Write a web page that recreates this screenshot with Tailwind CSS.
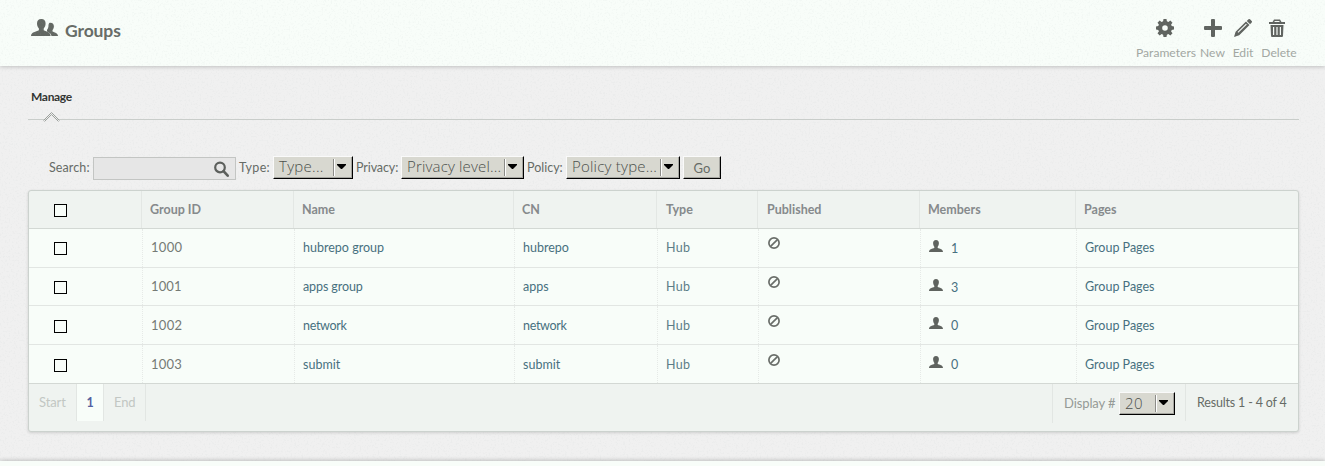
<!DOCTYPE html>
<html lang="en">
<head>
<meta charset="utf-8">
<title>Groups</title>
<script src="https://cdn.jsdelivr.net/npm/@tailwindcss/browser@4"></script>
</head>
<body class="relative h-[466px] overflow-hidden bg-[#f0f0f0] font-['Lato',sans-serif] text-[13px] leading-[16px] text-[#666b66]">
<svg width="0" height="0" class="absolute"><defs>
<symbol id="person" viewBox="0 0 14 12"><path d="M7 0C5 0 4 1.300 4.100 3.200 4.200 4.900 4.800 6 5.300 6.700v1.400C3.500 8.900 0 9 0 12h14c0-3-3.500-3.100-5.300-3.900V6.700C9.200 6 9.800 4.900 9.900 3.200 10 1.300 9 0 7 0z"/></symbol>
<symbol id="ban" viewBox="0 0 12 12"><circle cx="6" cy="6" r="5.100" fill="none" stroke="currentColor" stroke-width="1.700"/><path d="M2.800 9.200 9.200 2.800" stroke="currentColor" stroke-width="1.700"/></symbol>
</defs></svg>

<header class="flex h-[66px] justify-between bg-[#f8fdf9] shadow-[0_1px_4px_rgba(0,0,0,0.2)]">
  <div class="flex pl-[31px] pt-[18px]">
    <svg class="h-[19px] w-[27px] fill-[#636863]" viewBox="0 0 27 19"><path d="M19.300 4.800c2.400 0 3.700 1.600 3.600 3.800 0 1.600-.7 2.800-1.400 3.500v1.300c1.800 1 5.500 1.300 5.500 4.600h-6.500c-.5-2.400-2-3.400-4.500-4.600v-1.600c1-1 1.600-2.900 1.500-4.900.2-1.500.9-2.100 1.800-2.100z"/><path d="M10.300 1C7.400 1 5.900 3 6 5.700c.1 2 .9 3.700 1.900 4.700v1.900C5 13.800 0 14.200 0 18h19.600c0-3.800-3.900-4.200-6.900-5.700v-1.900c1-1 1.800-2.700 1.900-4.700C14.700 3 13.200 1 10.300 1z"/></svg>
    <h1 class="ml-[7px] mt-[2px] text-[17.500px] leading-[22px] font-bold tracking-[-0.1px]">Groups</h1>
  </div>
  <nav class="flex pr-[24px] pt-[18px] text-[12.100px] leading-[16px] text-[#a2a7a2]">
    <a class="flex w-[60px] flex-col items-center gap-[7px] whitespace-nowrap">
      <svg class="mr-[3px] h-[20px] w-[20px] fill-[#5f635f]" viewBox="0 0 20 20"><path fill-rule="evenodd" d="M8.500 1h3l.4 2.300 1.500.6 1.900-1.400 2.200 2.200-1.400 1.900.6 1.500 2.300.4v3l-2.300.4-.6 1.500 1.400 1.900-2.200 2.200-1.900-1.400-1.500.6-.4 2.300h-3l-.4-2.300-1.500-.6-1.900 1.400-2.200-2.200 1.400-1.900-.6-1.500L1 11.500v-3l2.300-.4.6-1.500-1.400-1.900 2.200-2.200 1.900 1.400 1.500-.6zM10 7.200a2.800 2.800 0 1 0 0 5.600 2.800 2.800 0 0 0 0-5.600z"/></svg><span>Parameters</span></a>
    <a class="flex w-[33px] flex-col items-center gap-[7px] whitespace-nowrap">
      <svg class="h-[20px] w-[20px] fill-[#5f635f]" viewBox="0 0 20 20"><path d="M8 2q0-1 1-1h2q1 0 1 1v6h6q1 0 1 1v2q0 1-1 1h-6v6q0 1-1 1H9q-1 0-1-1v-6H2q-1 0-1-1V9q0-1 1-1h6z"/></svg><span>New</span></a>
    <a class="flex w-[28px] flex-col items-center gap-[7px] whitespace-nowrap">
      <svg class="h-[20px] w-[20px] fill-[#5f635f]" viewBox="0 0 20 20"><path fill-rule="evenodd" d="M13 3.500l3.500 3.500L6.200 17.300 1 19l1.600-5.300zM4.600 14l.7.800 8.500-8.300-.8-.8zM15.500 1.200q.7-.6 1.500 0l1.700 1.800q.8.800 0 1.600l-1.600 1.600-3.300-3.300z"/></svg><span>Edit</span></a>
    <a class="flex w-[44px] flex-col items-center gap-[7px] whitespace-nowrap">
      <svg class="mr-[5px] h-[20px] w-[16px] fill-[#5f635f]" viewBox="0 0 16 20"><path d="M5 1.500h6l1.500 2.500H16v2H0V4h3.500zM5.800 3l-.5 1h5.400l-.5-1z" fill-rule="evenodd"/><path fill-rule="evenodd" d="M1.500 7h13L14 18q-.1 1-1 1H3q-.9 0-1-1zM4 9v8h1.200V9zM7.400 9v8h1.200V9zM10.800 9v8H12V9z"/></svg><span>Delete</span></a>
  </nav>
</header>

<!-- paper grain -->
<svg class="pointer-events-none absolute inset-0 h-[466px] w-[1325px] opacity-[0.07]"><filter id="grain"><feTurbulence type="fractalNoise" baseFrequency=".55" numOctaves="2" seed="4"/><feColorMatrix values="0 0 0 0 .45  0 0 0 0 .5  0 0 0 0 .5  5 0 0 0 -2.600"/></filter><rect width="1325" height="466" filter="url(#grain)"/></svg>

<main class="relative mx-[28px] w-[1271px]">
  <div class="relative flex h-[54px] border-b border-[#c9cdca] pl-[3px] pt-[23px]">
    <span class="text-[12px] font-bold tracking-[-0.32px] text-[#333633]">Manage</span>
    <svg class="absolute left-[15px] top-[45px] h-[12px] w-[17px]" viewBox="0 0 17 12"><path d="M0 11 8.500 2.500 17 11z" fill="#eeeeee"/><path d="M.5 9.500 8.500 1.500l8 8M1.500 10.500 8.500 3.500l7 7" fill="none" stroke="#9ca19d"/></svg>
  </div>

  <form class="flex h-[70px] items-start pl-[21px] pt-[36px]">
    <label class="mt-[4px] w-[44px] whitespace-nowrap text-[12.500px] tracking-[0.1px]">Search:</label>
    <div class="mt-px flex h-[23px] w-[143px] justify-end border border-[#c3c5c3] bg-[#e6e6e6] pr-[5px] pt-[3px]">
      <svg class="h-[17px] w-[17px]" viewBox="0 0 17 17" fill="none" stroke="#5c5f5c"><circle cx="7" cy="6.500" r="4.800" stroke-width="2.200"/><path d="m10.500 10.200 4.200 4.500" stroke-width="2.600" stroke-linecap="round"/></svg>
    </div>
    <label class="ml-[3px] mt-[4px] w-[34px] whitespace-nowrap text-[12.500px] tracking-[0.3px]">Type:</label>
    <div class="flex h-[23px] w-[80px] border border-t-[#fafafa] border-l-[#fafafa] border-r-black border-b-black bg-[#d8d8d0] pl-[5px] font-['Open_Sans',sans-serif] text-[15px] font-light leading-[19px] text-[#4c504c] shadow-[inset_-1px_-1px_0_#a5a5a0]"><span class="w-[54px] whitespace-nowrap tracking-[0.3px]">Type...</span><i class="mt-[2px] h-[17px] w-[2px] border-l border-[#8c8c88] bg-white"></i><svg class="ml-[2px] mt-[7px] h-[6px] w-[9px]" viewBox="0 0 9 6"><path d="M0 0h9v1L5 5H4L0 1z"/></svg></div>
    <label class="ml-[3px] mt-[4px] w-[45px] whitespace-nowrap text-[12.500px] tracking-[-0.1px]">Privacy:</label>
    <div class="flex h-[23px] w-[123px] border border-t-[#fafafa] border-l-[#fafafa] border-r-black border-b-black bg-[#d8d8d0] pl-[5px] font-['Open_Sans',sans-serif] text-[15px] font-light leading-[19px] text-[#4c504c] shadow-[inset_-1px_-1px_0_#a5a5a0]"><span class="w-[97px] whitespace-nowrap tracking-[0.16px]">Privacy level...</span><i class="mt-[2px] h-[17px] w-[2px] border-l border-[#8c8c88] bg-white"></i><svg class="ml-[2px] mt-[7px] h-[6px] w-[9px]" viewBox="0 0 9 6"><path d="M0 0h9v1L5 5H4L0 1z"/></svg></div>
    <label class="ml-[3px] mt-[4px] w-[39px] whitespace-nowrap text-[12.500px]">Policy:</label>
    <div class="flex h-[23px] w-[114px] border border-t-[#fafafa] border-l-[#fafafa] border-r-black border-b-black bg-[#d8d8d0] pl-[5px] font-['Open_Sans',sans-serif] text-[15px] font-light leading-[19px] text-[#4c504c] shadow-[inset_-1px_-1px_0_#a5a5a0]"><span class="w-[88px] whitespace-nowrap tracking-[0.22px]">Policy type...</span><i class="mt-[2px] h-[17px] w-[2px] border-l border-[#8c8c88] bg-white"></i><svg class="ml-[2px] mt-[7px] h-[6px] w-[9px]" viewBox="0 0 9 6"><path d="M0 0h9v1L5 5H4L0 1z"/></svg></div>
    <button type="button" class="ml-[3px] h-[23px] w-[38px] border border-t-[#fafafa] border-l-[#fafafa] border-r-black border-b-black bg-[#d8d8d0] text-[13px] leading-[20px] shadow-[inset_-1px_-1px_0_#a5a5a0]">Go</button>
  </form>

  <section class="h-[242px] overflow-hidden rounded-[3px] border border-[#ccd2ce] bg-[#eff3f0] shadow-[0_1px_3px_rgba(0,0,0,0.14)]">
    <div class="grid h-[38px] grid-cols-[113px_152px_220px_143px_101px_162px_156px_1fr] border-b border-[#d3d8d4] text-[12.500px] font-bold text-[#868a8c] *:border-r *:border-[#e3e7e4] *:pt-[11px] *:pl-[8px] *:last:border-r-0">
      <div><i class="ml-[17px] mt-[2px] block size-[13px] border border-black bg-[#f8fdf9]"></i></div><div>Group ID</div><div>Name</div><div>CN</div><div class="indent-px">Type</div><div class="indent-px">Published</div><div>Members</div><div>Pages</div>
    </div>
    <div class="grid h-[39px] grid-cols-[113px_152px_220px_143px_101px_162px_156px_1fr] border-b border-[#e2e6e3] bg-[#f8fdf9] text-[12.500px] text-[#477080] *:border-l *:border-dotted *:border-[#e6eae7] *:pt-[11px] *:pl-[8px] *:first:border-l-0">
      <div><i class="ml-[17px] mt-[2px] block size-[13px] border border-black"></i></div><div class="text-[13px] leading-[14px] tracking-[0.3px] text-[#757a75]">1000</div><div>hubrepo group</div><div>hubrepo</div><div class="tracking-[0.3px] text-[#5c7d88]">Hub</div><div class="text-[#6a6e6a]"><svg class="ml-px mt-[-3px] size-[12px]"><use href="#ban"/></svg></div><div class="flex gap-[8px]"><svg class="h-[12px] w-[14px] fill-[#5f635f]"><use href="#person"/></svg><span class="mt-px">1</span></div><div>Group Pages</div>
    </div>
    <div class="grid h-[38px] grid-cols-[113px_152px_220px_143px_101px_162px_156px_1fr] border-b border-[#e2e6e3] bg-[#f8fdf9] text-[12.500px] text-[#477080] *:border-l *:border-dotted *:border-[#e6eae7] *:pt-[11px] *:pl-[8px] *:first:border-l-0">
      <div><i class="ml-[17px] mt-[2px] block size-[13px] border border-black"></i></div><div class="text-[13px] leading-[14px] tracking-[0.1px] text-[#757a75]">1001</div><div class="tracking-[-0.1px]">apps group</div><div>apps</div><div class="tracking-[0.3px] text-[#5c7d88]">Hub</div><div class="text-[#6a6e6a]"><svg class="ml-px mt-[-3px] size-[12px]"><use href="#ban"/></svg></div><div class="flex gap-[8px]"><svg class="h-[12px] w-[14px] fill-[#5f635f]"><use href="#person"/></svg><span class="mt-px">3</span></div><div>Group Pages</div>
    </div>
    <div class="grid h-[39px] grid-cols-[113px_152px_220px_143px_101px_162px_156px_1fr] border-b border-[#e2e6e3] bg-[#f8fdf9] text-[12.500px] text-[#477080] *:border-l *:border-dotted *:border-[#e6eae7] *:pt-[12px] *:pl-[8px] *:first:border-l-0">
      <div><i class="ml-[17px] mt-[2px] block size-[13px] border border-black"></i></div><div class="text-[13px] leading-[14px] tracking-[0.3px] text-[#757a75]">1002</div><div class="tracking-[-0.3px]">network</div><div class="tracking-[-0.3px]">network</div><div class="tracking-[0.3px] text-[#5c7d88]">Hub</div><div class="text-[#6a6e6a]"><svg class="ml-px mt-[-3px] size-[12px]"><use href="#ban"/></svg></div><div class="flex gap-[8px]"><svg class="mt-[-1px] h-[12px] w-[14px] fill-[#5f635f]"><use href="#person"/></svg><span>0</span></div><div>Group Pages</div>
    </div>
    <div class="grid h-[39px] grid-cols-[113px_152px_220px_143px_101px_162px_156px_1fr] border-b border-[#d3d8d4] bg-[#f8fdf9] text-[12.500px] text-[#477080] *:border-l *:border-dotted *:border-[#e6eae7] *:pt-[12px] *:pl-[8px] *:first:border-l-0">
      <div><i class="ml-[17px] mt-[2px] block size-[13px] border border-black"></i></div><div class="text-[13px] leading-[14px] tracking-[0.2px] text-[#757a75]">1003</div><div>submit</div><div>submit</div><div class="tracking-[0.3px] text-[#5c7d88]">Hub</div><div class="text-[#6a6e6a]"><svg class="ml-px mt-[-3px] size-[12px]"><use href="#ban"/></svg></div><div class="flex gap-[8px]"><svg class="mt-[-1px] h-[12px] w-[14px] fill-[#5f635f]"><use href="#person"/></svg><span>0</span></div><div>Group Pages</div>
    </div>
    <footer class="flex justify-between">
      <div class="flex h-[37px] leading-[37px] text-[#c2c7c3] *:border-r *:border-[#e2e6e3]">
        <span class="w-[48px] pl-[10px] tracking-[-0.1px]">Start</span><span class="w-[27px] bg-[#f8fdf9] text-center text-[12.500px] font-bold text-[#5460a0]">1</span><span class="w-[42px] pl-[10px] tracking-[-0.2px]">End</span>
      </div>
      <div class="flex">
        <div class="flex h-[39px] border-l border-[#e2e6e3] pl-[11px] pt-[8px]">
          <span class="mt-[3px] w-[55px] whitespace-nowrap tracking-[-0.1px] text-[#959a96]">Display #</span>
          <div class="flex h-[23px] w-[56px] border border-t-[#fafafa] border-l-[#fafafa] border-r-black border-b-black bg-[#d8d8d0] pl-[5px] font-['Open_Sans',sans-serif] text-[15px] font-light leading-[20px] text-[#4c504c] shadow-[inset_-1px_-1px_0_#a5a5a0]"><span class="w-[30px] whitespace-nowrap tracking-[0.4px]">20</span><i class="mt-[2px] h-[17px] w-[2px] border-l border-[#8c8c88] bg-white"></i><svg class="ml-[2px] mt-[7px] h-[6px] w-[9px]" viewBox="0 0 9 6"><path d="M0 0h9v1L5 5H4L0 1z"/></svg></div>
        </div>
        <span class="ml-[10px] h-[37px] w-[113px] whitespace-nowrap border-l border-[#e2e6e3] pl-[11px] text-[12.500px] leading-[37px] tracking-[-0.17px]">Results 1 - 4 of 4</span>
      </div>
    </footer>
  </section>
</main>
<div class="relative mt-[29px] h-[6px] bg-[#f8fdf9] shadow-[0_-1px_4px_rgba(0,0,0,0.2)]"></div>
</body>
</html>
